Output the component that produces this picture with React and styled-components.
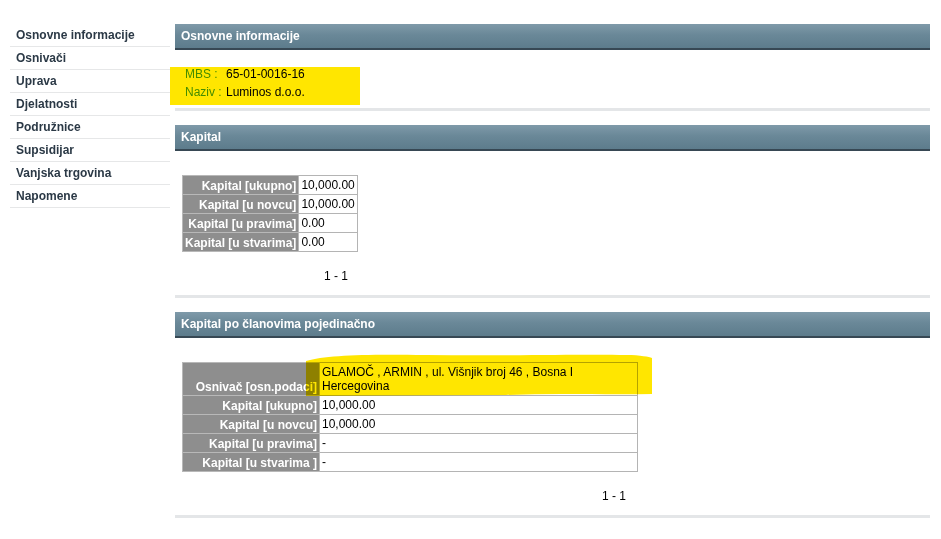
import React from 'react';
import styled, {createGlobalStyle} from 'styled-components';

const GlobalStyle = createGlobalStyle`
    body {
        margin: 0;
        background: #fff;
        font-family: "Liberation Sans", Arial, sans-serif;
        font-size: 12px;
        color: #000;
    }
`;

const StyledPage = styled.div`
    display: flex;
    align-items: flex-start;
    padding-top: 24px;
`;

const StyledSidebar = styled.ul`
    list-style: none;
    margin: 0 5px 0 10px;
    padding: 0;
    width: 160px;
`;

const StyledSideItem = styled.li`
    height: 22px;
    line-height: 22px;
    padding-left: 6px;
    border-bottom: 1px solid #e6e7e8;
    color: #2b3946;
    font-size: 12px;
    font-weight: bold;
`;

const StyledMain = styled.div`
    width: 755px;
`;

const StyledSection = styled.div`
    margin-bottom: 14px;
`;

const StyledHeader = styled.div`
    height: 24px;
    line-height: 25px;
    padding-left: 6px;
    background: linear-gradient(#7f9aa9, #6a8898 45%, #5d7c8c);
    border-bottom: 2px solid #374854;
    color: #fff;
    font-weight: bold;
    font-size: 12px;
`;

const StyledSeparator = styled.div`
    height: 3px;
    background: #e4e6e8;
`;

const StyledInfo = styled.div`
    position: relative;
    padding: 15px 0 4px 10px;
    height: 39px;
`;

const StyledInfoRow = styled.div`
    height: 18px;
    line-height: 18px;
    display: flex;
`;

const StyledLabel = styled.span`
    color: #449c22;
    width: 41px;
    white-space: nowrap;
`;

const StyledMarker = styled.div`
    position: absolute;
    left: -5px;
    top: 17px;
    width: 190px;
    height: 38px;
    background: #ffe600;
    mix-blend-mode: multiply;
`;

const StyledTableWrap = styled.div`
    position: relative;
    padding: 24px 0 0 7px;
    width: ${props => props.width};
`;

const StyledTable = styled.table`
    border-collapse: collapse;
    width: ${props => props.width || 'auto'};
    font-size: 12px;
    td, th {
        border: 1px solid #b4b4b4;
        height: 16px;
        line-height: 14px;
        padding: 1px 2px;
    }
    th {
        background: #8e8e8e;
        color: #fff;
        text-align: right;
        font-weight: bold;
        white-space: nowrap;
        vertical-align: bottom;
        border-color: #b8b8b8;
    }
    td {
        background: #fff;
        text-align: left;
    }
`;

const StyledPager = styled.div`
    text-align: right;
    padding: 17px 12px 12px 0;
    line-height: 14px;
    font-size: 12px;
`;

const StyledScribble = styled.svg`
    position: absolute;
    left: 131px;
    top: 16px;
    mix-blend-mode: multiply;
    pointer-events: none;
`;

const sideItems = ['Osnovne informacije', 'Osnivači', 'Uprava', 'Djelatnosti', 'Podružnice', 'Supsidijar', 'Vanjska trgovina', 'Napomene'];

const kapital = [
    ['Kapital [ukupno]', '10,000.00'],
    ['Kapital [u novcu]', '10,000.00'],
    ['Kapital [u pravima]', '0.00'],
    ['Kapital [u stvarima]', '0.00'],
];

const clanovi = [
    ['Kapital [ukupno]', '10,000.00'],
    ['Kapital [u novcu]', '10,000.00'],
    ['Kapital [u pravima]', '-'],
    ['Kapital [u stvarima ]', '-'],
];

function App() {
    return (
        <StyledPage>
            <GlobalStyle />
            <StyledSidebar>
                {sideItems.map(item => <StyledSideItem key={item}>{item}</StyledSideItem>)}
            </StyledSidebar>
            <StyledMain>
                <StyledSection>
                    <StyledHeader>Osnovne informacije</StyledHeader>
                    <StyledInfo>
                        <StyledMarker />
                        <StyledInfoRow><StyledLabel>MBS :</StyledLabel><span>65-01-0016-16</span></StyledInfoRow>
                        <StyledInfoRow><StyledLabel>Naziv :</StyledLabel><span>Luminos d.o.o.</span></StyledInfoRow>
                    </StyledInfo>
                    <StyledSeparator />
                </StyledSection>

                <StyledSection>
                    <StyledHeader>Kapital</StyledHeader>
                    <StyledTableWrap width="178px">
                        <StyledTable>
                            <tbody>
                                {kapital.map(([k, v]) => (
                                    <tr key={k}><th>{k}</th><td>{v}</td></tr>
                                ))}
                            </tbody>
                        </StyledTable>
                        <StyledPager>1 - 1</StyledPager>
                    </StyledTableWrap>
                    <StyledSeparator />
                </StyledSection>

                <StyledSection>
                    <StyledHeader>Kapital po članovima pojedinačno</StyledHeader>
                    <StyledTableWrap width="456px">
                        <StyledTable width="456px">
                            <tbody>
                                <tr>
                                    <th style={{width: '132px'}}>Osnivač [osn.podaci]</th>
                                    <td style={{height: '30px'}}>GLAMOČ , ARMIN , ul. Višnjik broj 46 , Bosna I Hercegovina</td>
                                </tr>
                                {clanovi.map(([k, v]) => (
                                    <tr key={k}><th>{k}</th><td>{v}</td></tr>
                                ))}
                            </tbody>
                        </StyledTable>
                        <StyledScribble width="350" height="45" viewBox="0 0 350 45">
                            <path d="M0 7 C20 1 60 0 120 1 C200 2 280 0 320 1 C335 1 343 3 346 4 L346 40 C300 41 250 39 200 41 L0 42 Z" fill="#ffe600" />
                        </StyledScribble>
                        <StyledPager>1 - 1</StyledPager>
                    </StyledTableWrap>
                    <StyledSeparator />
                </StyledSection>
            </StyledMain>
        </StyledPage>
    );
}

export default App;
